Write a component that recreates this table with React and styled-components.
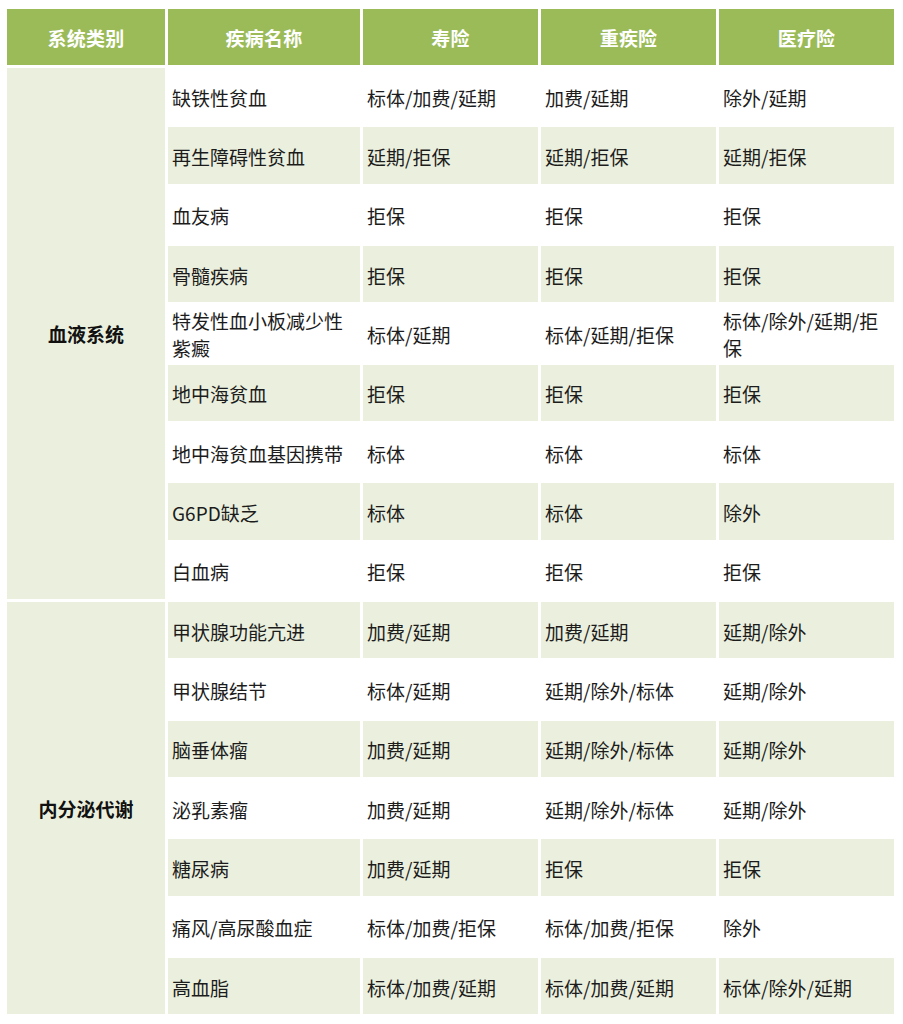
import React from "react";
import styled, { createGlobalStyle } from "styled-components";

const GlobalStyle = createGlobalStyle`
  html, body {
    margin: 0;
    padding: 0;
    background: #ffffff;
  }
  body {
    padding: 9px 0 0 7px;
    font-family: "Noto Sans CJK SC", "Microsoft YaHei", sans-serif;
    color: #1c1c1c;
  }
`;

const Table = styled.div`
  display: grid;
  width: 887px;
  grid-template-columns: 158px 192px 175px 175px 175px;
  grid-template-rows: 56px repeat(16, 56.33px);
  column-gap: 3px;
  row-gap: 3px;
`;

const HeaderCell = styled.div`
  background: #9bbb59;
  color: #ffffff;
  font-size: 19px;
  font-weight: 700;
  display: flex;
  align-items: center;
  justify-content: center;
  letter-spacing: 0.2px;
`;

const GroupCell = styled.div`
  grid-column: 1;
  grid-row: span ${(p) => p.$span};
  background: #ebf0de;
  font-size: 19px;
  font-weight: 700;
  color: #111;
  display: flex;
  align-items: center;
  justify-content: center;
`;

const Cell = styled.div`
  background: ${(p) => (p.$shaded ? "#ebf0de" : "#ffffff")};
  font-size: 19px;
  line-height: 27px;
  display: flex;
  align-items: center;
  padding: 2px 6px 0 4px;
  box-sizing: border-box;
`;

const headers = ["系统类别", "疾病名称", "寿险", "重疾险", "医疗险"];

const groups = [
  {
    name: "血液系统",
    rows: [
      ["缺铁性贫血", "标体/加费/延期", "加费/延期", "除外/延期"],
      ["再生障碍性贫血", "延期/拒保", "延期/拒保", "延期/拒保"],
      ["血友病", "拒保", "拒保", "拒保"],
      ["骨髓疾病", "拒保", "拒保", "拒保"],
      ["特发性血小板减少性紫癜", "标体/延期", "标体/延期/拒保", "标体/除外/延期/拒保"],
      ["地中海贫血", "拒保", "拒保", "拒保"],
      ["地中海贫血基因携带", "标体", "标体", "标体"],
      ["G6PD缺乏", "标体", "标体", "除外"],
      ["白血病", "拒保", "拒保", "拒保"],
    ],
  },
  {
    name: "内分泌代谢",
    rows: [
      ["甲状腺功能亢进", "加费/延期", "加费/延期", "延期/除外"],
      ["甲状腺结节", "标体/延期", "延期/除外/标体", "延期/除外"],
      ["脑垂体瘤", "加费/延期", "延期/除外/标体", "延期/除外"],
      ["泌乳素瘤", "加费/延期", "延期/除外/标体", "延期/除外"],
      ["糖尿病", "加费/延期", "拒保", "拒保"],
      ["痛风/高尿酸血症", "标体/加费/拒保", "标体/加费/拒保", "除外"],
      ["高血脂", "标体/加费/延期", "标体/加费/延期", "标体/除外/延期"],
    ],
  },
];

export default function App() {
  let index = 0;
  return (
    <>
      <GlobalStyle />
      <Table>
        {headers.map((h) => (
          <HeaderCell key={h}>{h}</HeaderCell>
        ))}
        {groups.map((g) => (
          <React.Fragment key={g.name}>
            <GroupCell $span={g.rows.length}>{g.name}</GroupCell>
            {g.rows.map((row) => {
              const shaded = index % 2 === 1;
              index += 1;
              return row.map((text, ci) => (
                <Cell key={row[0] + ci} $shaded={shaded}>
                  {text}
                </Cell>
              ));
            })}
          </React.Fragment>
        ))}
      </Table>
    </>
  );
}
